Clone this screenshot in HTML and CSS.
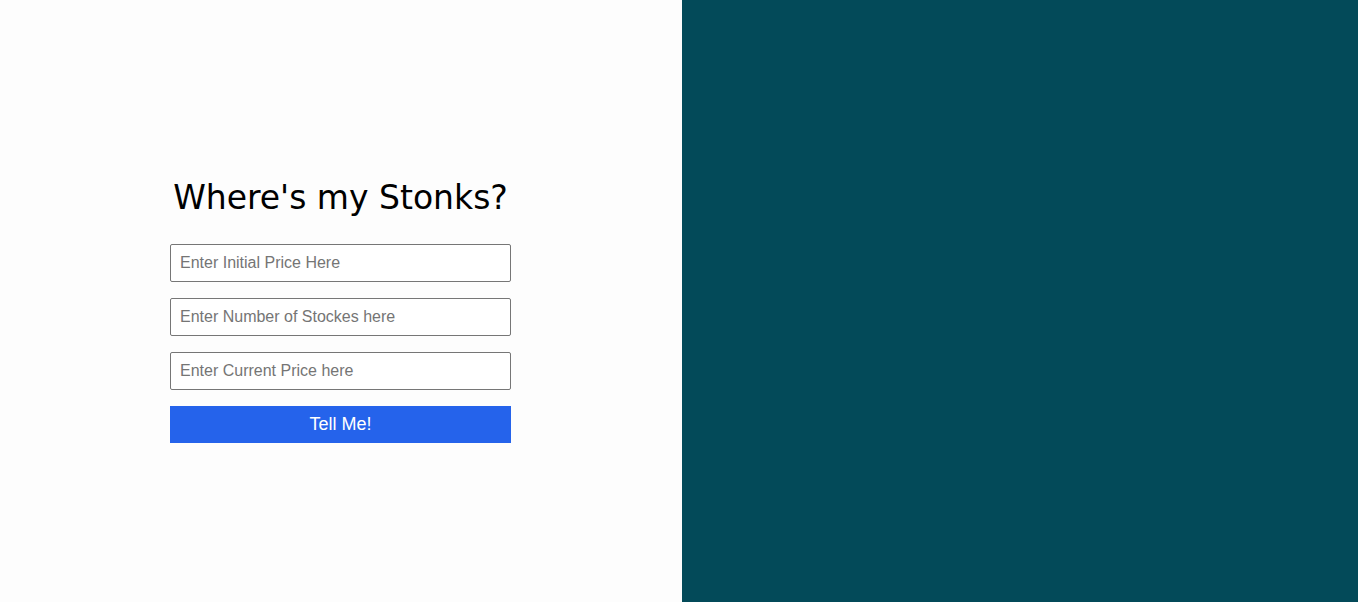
FILE: index.html
```html
<!DOCTYPE html>
<html lang="en">
<head>
<meta charset="utf-8">
<title>Where's my Stonks?</title>
<link rel="stylesheet" href="styles.css">
</head>
<body>
<div class="page">
  <section class="left">
    <form class="form">
      <h1 class="title">Where's my Stonks?</h1>
      <input class="field" type="text" placeholder="Enter Initial Price Here">
      <input class="field" type="text" placeholder="Enter Number of Stockes here">
      <input class="field" type="text" placeholder="Enter Current Price here">
      <button class="btn" type="button">Tell Me!</button>
    </form>
  </section>
  <section class="right"></section>
</div>
</body>
</html>
```

FILE: styles.css
```css
html, body {
  margin: 0;
  padding: 0;
  height: 100%;
}
.page {
  display: grid;
  grid-template-columns: 682px 1fr;
  height: 602px;
}
.left {
  background: #fdfdfd;
  display: flex;
  justify-content: flex-start;
  align-items: flex-start;
  padding: 176px 0 0 170px;
}
.right {
  background: #034a59;
}
.form {
  width: 341px;
  display: flex;
  flex-direction: column;
  gap: 16px;
}
.title {
  margin: 2px 0 10px;
  font-family: "DejaVu Sans", sans-serif;
  font-weight: 400;
  font-size: 33px;
  line-height: 40px;
  text-align: center;
  color: #000;
  white-space: nowrap;
}
.field {
  box-sizing: border-box;
  width: 100%;
  height: 38px;
  border: 1px solid #767676;
  border-radius: 2px;
  padding: 0 9px;
  font-family: "Liberation Sans", Arial, sans-serif;
  font-size: 16px;
  color: #000;
  background: #fff;
}
.field::placeholder {
  color: #757575;
}
.btn {
  height: 37px;
  border: none;
  background: #2563eb;
  color: #fff;
  font-family: "Liberation Sans", Arial, sans-serif;
  font-size: 18px;
  padding: 0;
  cursor: pointer;
}
```
